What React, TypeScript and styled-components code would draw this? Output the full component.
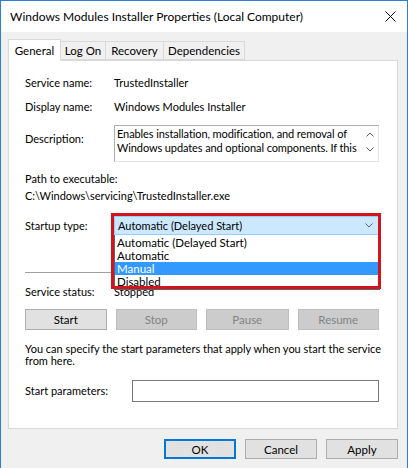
import React from "react";
import styled, { createGlobalStyle } from "styled-components";

const Global = createGlobalStyle`
  html, body { margin: 0; padding: 0; background: #ffffff; }
  body { font-family: Lato, "Liberation Sans", Arial, sans-serif; font-size: 11px; color: #000; }
  * { box-sizing: border-box; }
`;

const Window = styled.div`
  width: 408px;
  height: 468px;
  border: 1px solid #2b7fd6;
  border-bottom: none;
  background: #f0f0f0;
  display: flex;
  flex-direction: column;
  overflow: hidden;
`;

const TitleBar = styled.div`
  height: 31px;
  flex: none;
  background: #ffffff;
  display: flex;
  align-items: center;
  justify-content: space-between;
  padding: 0 11px 0 9px;
  font-size: 12px;
`;

const CloseIcon = styled.svg`
  width: 11px;
  height: 11px;
`;

const TabStrip = styled.div`
  display: flex;
  align-items: flex-end;
  padding: 0 0 0 7px;
  height: 28px;
  flex: none;
  position: relative;
  z-index: 1;
  font-size: 11.5px;
`;

const Tab = styled.div<{ $active?: boolean; $w: number }>`
  width: ${(p) => p.$w}px;
  height: ${(p) => (p.$active ? "22px" : "19px")};
  margin-bottom: ${(p) => (p.$active ? "-1px" : "0")};
  display: flex;
  align-items: center;
  justify-content: center;
  background: ${(p) => (p.$active ? "#ffffff" : "#f0f0f0")};
  border: 1px solid #d9d9d9;
  border-bottom: ${(p) => (p.$active ? "none" : "1px solid #d9d9d9")};
  & + & { margin-left: -1px; }
`;

const Panel = styled.div`
  margin: 0 9px 0 7px;
  height: 369px;
  flex: none;
  background: #ffffff;
  border: 1px solid #d9d9d9;
  padding: 14px 18px 0 16px;
  display: flex;
  flex-direction: column;
  position: relative;
  white-space: nowrap;
`;

const Row = styled.div<{ $mt?: number; $top?: boolean }>`
  display: flex;
  align-items: ${(p) => (p.$top ? "flex-start" : "center")};
  margin-top: ${(p) => p.$mt ?? 0}px;
  min-height: 16px;
`;

const Label = styled.div<{ $w?: number; $mt?: number }>`
  width: ${(p) => p.$w ?? 89}px;
  flex: none;
  line-height: 16px;
  margin-top: ${(p) => p.$mt ?? 0}px;
`;

const Value = styled.div`
  line-height: 16px;
`;

const DescBox = styled.div`
  width: 266px;
  height: 37px;
  border: 1px solid #abadb3;
  border-right-color: #e3e3e3;
  border-bottom-color: #e3e3e3;
  padding: 1px 0 0 2px;
  display: flex;
  line-height: 14px;
`;

const DescText = styled.div`
  flex: 1;
  overflow: hidden;
  letter-spacing: -0.1px;
`;

const ScrollCol = styled.div`
  width: 17px;
  display: flex;
  flex-direction: column;
  justify-content: space-between;
  align-items: center;
  padding: 5px 0 9px;
`;

const Chev = styled.svg`
  width: 8px;
  height: 5px;
`;

const Block = styled.div<{ $mt?: number }>`
  margin-top: ${(p) => p.$mt ?? 0}px;
  line-height: 16px;
`;

const ComboWrap = styled.div`
  position: relative;
  width: 266px;
`;

const Combo = styled.div`
  height: 19px;
  background: #cce8ff;
  border: 1px solid #99ccff;
  display: flex;
  align-items: center;
  justify-content: space-between;
  padding: 0 5px 0 3px;
`;

const DropList = styled.div`
  position: absolute;
  left: 0;
  top: 19px;
  width: 266px;
  background: #ffffff;
  border: 1px solid #646464;
  border-top: none;
  padding: 1px 0 1px;
  z-index: 3;
`;

const DropItem = styled.div<{ $sel?: boolean }>`
  height: 13px;
  line-height: 13px;
  padding-left: 2px;
  font-size: 11.5px;
  background: ${(p) => (p.$sel ? "#3399ff" : "transparent")};
  color: ${(p) => (p.$sel ? "#ffffff" : "#000000")};
`;

const RedMark = styled.div`
  position: absolute;
  left: -3px;
  top: -3px;
  width: 270px;
  height: 76px;
  border: 3px solid #d2141e;
  z-index: 4;
  pointer-events: none;
`;

const Separator = styled.div`
  margin-top: 37px;
  height: 1px;
  background: #a0a0a0;
  width: 100%;
`;

const ButtonRow = styled.div`
  display: flex;
  gap: 9px;
  margin-top: 9px;
`;

const Btn = styled.div<{ $disabled?: boolean; $w?: number; $default?: boolean }>`
  width: ${(p) => p.$w ?? 82}px;
  height: 21px;
  display: flex;
  align-items: center;
  justify-content: center;
  font-size: 11.5px;
  background: ${(p) => (p.$disabled ? "#cccccc" : "#e1e1e1")};
  border: ${(p) => (p.$default ? "2px solid #0078d7" : p.$disabled ? "1px solid #bfbfbf" : "1px solid #adadad")};
  color: ${(p) => (p.$disabled ? "#838383" : "#000")};
`;

const Para = styled.div`
  margin-top: 13px;
  line-height: 12px;
`;

const ParamInput = styled.div`
  width: 248px;
  height: 22px;
  border: 1px solid #7a7a7a;
  background: #fff;
`;

const Footer = styled.div`
  display: flex;
  justify-content: flex-end;
  gap: 9px;
  padding: 10px 9px 0 0;
`;

const FootBtn = styled(Btn)`
  height: 20px;
`;

export default function App() {
  return (
    <>
      <Global />
      <Window>
        <TitleBar>
          <span>Windows Modules Installer Properties (Local Computer)</span>
          <CloseIcon viewBox="0 0 11 11">
            <path d="M0.5 0.5 L10.5 10.5 M10.5 0.5 L0.5 10.5" stroke="#111" strokeWidth="1" fill="none" />
          </CloseIcon>
        </TitleBar>
        <TabStrip>
          <Tab $active $w={53}>General</Tab>
          <Tab $w={46}>Log On</Tab>
          <Tab $w={59}>Recovery</Tab>
          <Tab $w={82}>Dependencies</Tab>
        </TabStrip>
        <Panel>
          <Row>
            <Label>Service name:</Label>
            <Value>TrustedInstaller</Value>
          </Row>
          <Row $mt={8}>
            <Label>Display name:</Label>
            <Value>Windows Modules Installer</Value>
          </Row>
          <Row $mt={10} $top>
            <Label $mt={6}>Description:</Label>
            <DescBox>
              <DescText>
                Enables installation, modification, and removal of
                <br />
                Windows updates and optional components. If this
              </DescText>
              <ScrollCol>
                <Chev viewBox="0 0 8 5">
                  <path d="M0.5 4.5 L4 1 L7.5 4.5" stroke="#606060" fill="none" />
                </Chev>
                <Chev viewBox="0 0 8 5">
                  <path d="M0.5 0.5 L4 4 L7.5 0.5" stroke="#606060" fill="none" />
                </Chev>
              </ScrollCol>
            </DescBox>
          </Row>
          <Block $mt={9}>Path to executable:</Block>
          <Block $mt={1}>C:\Windows\servicing\TrustedInstaller.exe</Block>
          <Row $mt={12}>
            <Label>Startup type:</Label>
            <ComboWrap>
              <Combo>
                <span>Automatic (Delayed Start)</span>
                <Chev viewBox="0 0 8 5">
                  <path d="M0.5 0.5 L4 4 L7.5 0.5" stroke="#606060" fill="none" />
                </Chev>
              </Combo>
              <DropList>
                <DropItem>Automatic (Delayed Start)</DropItem>
                <DropItem>Automatic</DropItem>
                <DropItem $sel>Manual</DropItem>
                <DropItem>Disabled</DropItem>
              </DropList>
              <RedMark />
            </ComboWrap>
          </Row>
          <Separator />
          <Row $mt={11}>
            <Label>Service status:</Label>
            <Value>Stopped</Value>
          </Row>
          <ButtonRow>
            <Btn>Start</Btn>
            <Btn $disabled>Stop</Btn>
            <Btn $disabled $w={83}>Pause</Btn>
            <Btn $disabled>Resume</Btn>
          </ButtonRow>
          <Para>
            You can specify the start parameters that apply when you start the service
            <br />
            from here.
          </Para>
          <Row $mt={13}>
            <Label $w={107}>Start parameters:</Label>
            <ParamInput />
          </Row>
        </Panel>
        <Footer>
          <FootBtn $default $w={72}>OK</FootBtn>
          <FootBtn $w={72}>Cancel</FootBtn>
          <FootBtn $w={72}>Apply</FootBtn>
        </Footer>
      </Window>
    </>
  );
}
